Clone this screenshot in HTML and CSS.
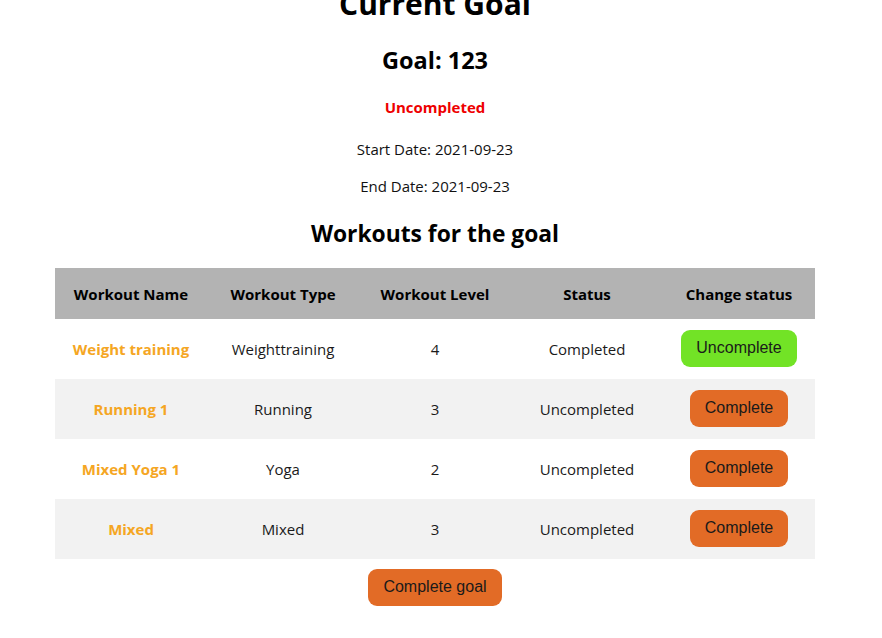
FILE: index.html
```html
<!DOCTYPE html>
<html>
<head>
<meta charset="utf-8">
<link rel="stylesheet" href="styles.css">
</head>
<body>
<main class="page">
  <h1 class="title">Current Goal</h1>
  <h2 class="goal">Goal: 123</h2>
  <p class="state">Uncompleted</p>
  <p class="date date-start">Start Date: 2021-09-23</p>
  <p class="date date-end">End Date: 2021-09-23</p>
  <h2 class="section">Workouts for the goal</h2>
  <table class="workouts">
    <thead>
      <tr>
        <th>Workout Name</th>
        <th>Workout Type</th>
        <th>Workout Level</th>
        <th>Status</th>
        <th>Change status</th>
      </tr>
    </thead>
    <tbody>
      <tr>
        <td class="name">Weight training</td>
        <td>Weighttraining</td>
        <td>4</td>
        <td>Completed</td>
        <td><button class="btn btn-green">Uncomplete</button></td>
      </tr>
      <tr>
        <td class="name">Running 1</td>
        <td>Running</td>
        <td>3</td>
        <td>Uncompleted</td>
        <td><button class="btn btn-orange">Complete</button></td>
      </tr>
      <tr>
        <td class="name">Mixed Yoga 1</td>
        <td>Yoga</td>
        <td>2</td>
        <td>Uncompleted</td>
        <td><button class="btn btn-orange">Complete</button></td>
      </tr>
      <tr>
        <td class="name">Mixed</td>
        <td>Mixed</td>
        <td>3</td>
        <td>Uncompleted</td>
        <td><button class="btn btn-orange">Complete</button></td>
      </tr>
    </tbody>
  </table>
  <button class="btn btn-orange btn-goal">Complete goal</button>
</main>
</body>
</html>
```

FILE: styles.css
```css
html, body {
  margin: 0;
  padding: 0;
  background: #ffffff;
}

body {
  font-family: "Open Sans", "Noto Sans", sans-serif;
  color: #1a1a1a;
  overflow: hidden;
}

.page {
  width: 760px;
  margin-left: 55px;
  display: flex;
  flex-direction: column;
  align-items: center;
  text-align: center;
}

.title {
  margin: -15px 0 0;
  font-size: 30px;
  line-height: 38px;
  font-weight: 700;
  color: #000;
}

.goal {
  margin: 22px 0 0;
  font-size: 23.5px;
  line-height: 30px;
  font-weight: 700;
  color: #000;
}

.state {
  margin: 21px 0 0;
  font-size: 15px;
  line-height: 22px;
  font-weight: 700;
  color: #ee0000;
}

.date {
  margin: 20px 0 0;
  font-size: 15px;
  line-height: 22px;
  color: #111;
}

.date-end {
  margin-top: 15px;
}

.section {
  margin: 22px 0 0;
  font-size: 22.8px;
  line-height: 30px;
  font-weight: 700;
  color: #000;
}

.workouts {
  margin-top: 19px;
  width: 760px;
  border-collapse: collapse;
  table-layout: fixed;
  font-size: 15px;
}

.workouts th {
  background: #b3b3b3;
  height: 51px;
  padding: 0;
  font-weight: 700;
  color: #000;
}

.workouts td {
  height: 60px;
  padding: 0;
  color: #1a1a1a;
}

.workouts tbody tr:nth-child(even) td {
  background: #f2f2f2;
}

.workouts td.name {
  color: #f5a623;
  font-weight: 700;
}

.btn {
  font-family: "Liberation Sans", Arial, sans-serif;
  font-size: 16px;
  line-height: 18px;
  color: #1a1a1a;
  border: none;
  border-radius: 9px;
  padding: 9px 15px 10px;
  cursor: pointer;
}

.workouts td .btn {
  position: relative;
  top: -1px;
}

.btn-orange {
  background: #e26b26;
}

.btn-green {
  background: #72e326;
}

.btn-goal {
  margin-top: 10px;
}
```
